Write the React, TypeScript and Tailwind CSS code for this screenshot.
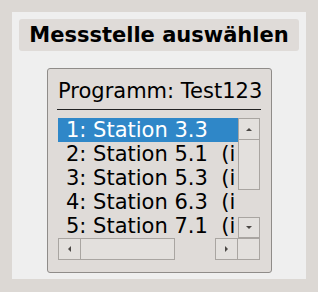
import React from "react";

const ROWS = [
  "1: Station 3.3",
  "2: Station 5.1  (i",
  "3: Station 5.3  (i",
  "4: Station 6.3  (i",
  "5: Station 7.1  (i",
];

const font = { fontFamily: '"DejaVu Sans", Verdana, sans-serif' };

function Arrow({ dir }: { dir: "up" | "down" | "left" | "right" }) {
  const pts = {
    up: "0,4 3,1 6,4",
    down: "0,1 3,4 6,1",
    left: "4,0 1,3 4,6",
    right: "1,0 4,3 1,6",
  }[dir];
  const vertical = dir === "up" || dir === "down";
  return (
    <svg width={vertical ? 6 : 5} height={vertical ? 5 : 6} viewBox={vertical ? "0 0 6 5" : "0 0 5 6"}>
      <polygon points={pts} fill="#4a4744" />
    </svg>
  );
}

function Btn({ dir, className }: { dir: "up" | "down" | "left" | "right"; className: string }) {
  return (
    <div
      className={`flex items-center justify-center border border-[#a9a5a1] bg-[#e3e0dd] ${className}`}
    >
      <Arrow dir={dir} />
    </div>
  );
}

export default function App() {
  return (
    <div className="w-[318px] h-[292px] bg-[#dcd8d4] px-[12px] pt-[12px] pb-[13px]" style={font}>
      <div className="h-full bg-[#efefef] pt-[7px] px-[7px] flex flex-col">
        {/* Titel */}
        <div className="h-[32px] rounded-[3px] bg-[#dfdbd8] text-center text-[21px] leading-[32px] font-bold text-black">
          Messstelle auswählen
        </div>

        {/* Gruppe */}
        <div className="mt-[17px] ml-[28px] w-[225px] h-[205px] rounded-[3px] border border-[#8f8c89] bg-[#dfdbd8] pl-[10px] pt-[10px]">
          <div className="text-[21px] leading-[24px] text-black whitespace-nowrap">Programm: Test123</div>
          <div className="mt-[6px] w-[204px] -ml-[1px] h-px bg-[#222]" />

          <div className="mt-[8px] w-[202px] flex flex-col">
            <div className="flex h-[120px]">
              <div className="w-[180px] h-[120px] overflow-hidden">
                {ROWS.map((r, i) => (
                  <div
                    key={r}
                    className={`h-[24px] leading-[24px] text-[21px] pl-[8px] whitespace-pre ${
                      i === 0 ? "bg-[#2f87c8] text-white" : "text-black"
                    }`}
                  >
                    {r}
                  </div>
                ))}
              </div>
              {/* vertikale Leiste */}
              <div className="w-[22px] flex flex-col">
                <Btn dir="up" className="h-[22px]" />
                <div className="h-[50px] border border-t-0 border-[#a9a5a1] bg-[#e3e0dd]" />
                <div className="h-[27px]" />
                <Btn dir="down" className="h-[21px]" />
              </div>
            </div>
            {/* horizontale Leiste */}
            <div className="flex h-[22px]">
              <Btn dir="left" className="w-[23px]" />
              <div className="w-[94px] border border-l-0 border-[#a9a5a1] bg-[#e3e0dd]" />
              <div className="w-[40px]" />
              <Btn dir="right" className="w-[23px]" />
              <div className="w-[22px] border border-l-0 border-[#a9a5a1] bg-[#e3e0dd]" />
            </div>
          </div>
        </div>
      </div>
    </div>
  );
}
